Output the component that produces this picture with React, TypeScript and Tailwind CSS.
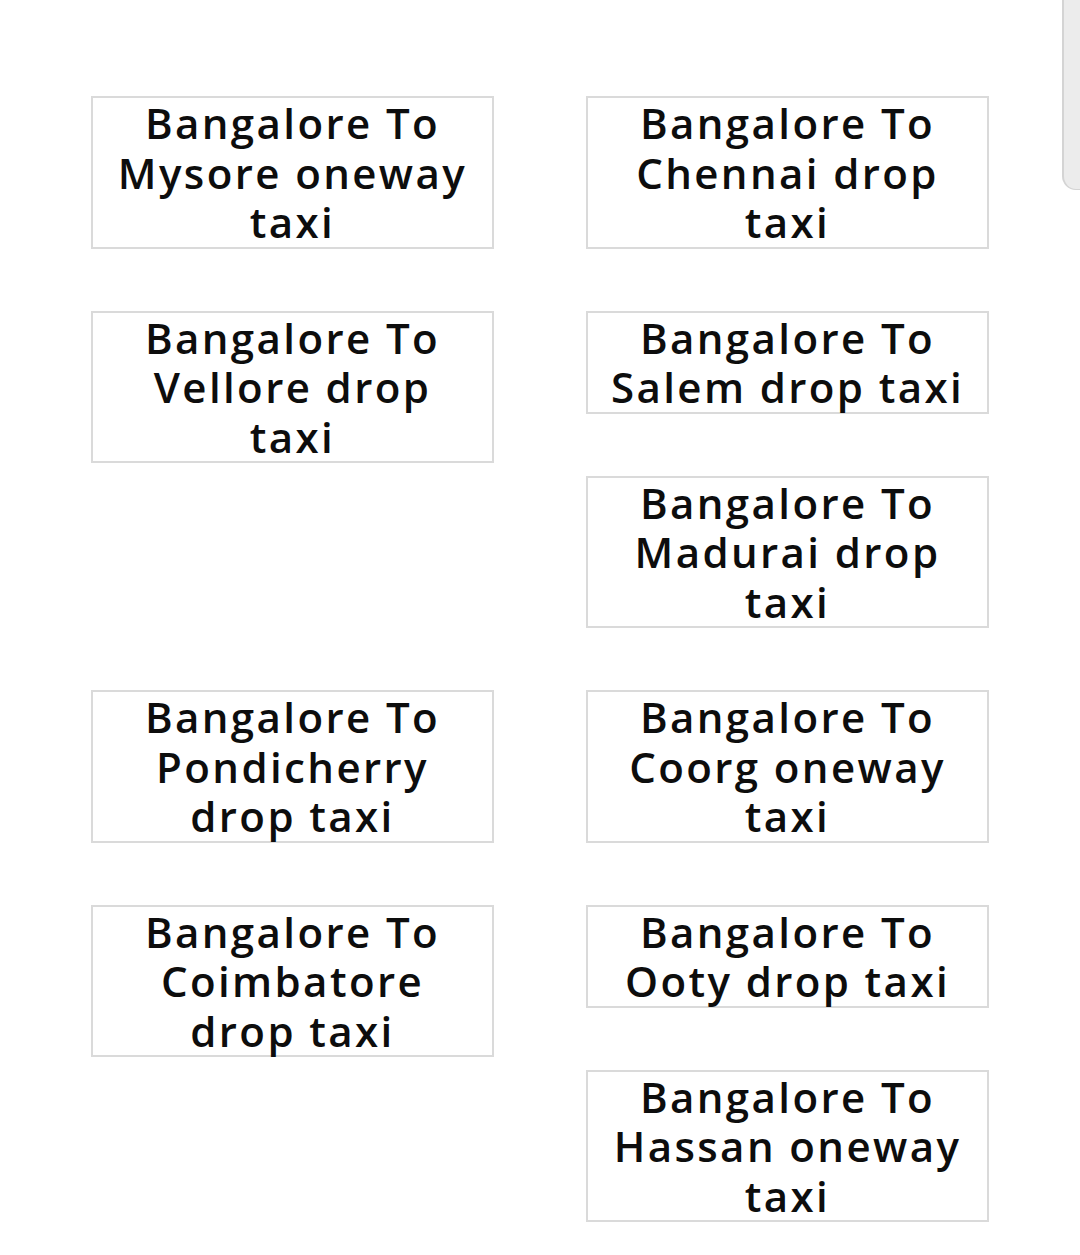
const routes = [
  { label: "Bangalore To Mysore oneway taxi", place: "col-start-1 row-start-1" },
  { label: "Bangalore To Chennai drop taxi", place: "col-start-2 row-start-1" },
  { label: "Bangalore To Vellore drop taxi", place: "col-start-1 row-start-2 row-span-2" },
  { label: "Bangalore To Salem drop taxi", place: "col-start-2 row-start-2" },
  { label: "Bangalore To Madurai drop taxi", place: "col-start-2 row-start-3" },
  { label: "Bangalore To Pondicherry drop taxi", place: "col-start-1 row-start-4" },
  { label: "Bangalore To Coorg oneway taxi", place: "col-start-2 row-start-4" },
  { label: "Bangalore To Coimbatore drop taxi", place: "col-start-1 row-start-5 row-span-2" },
  { label: "Bangalore To Ooty drop taxi", place: "col-start-2 row-start-5" },
  { label: "Bangalore To Hassan oneway taxi", place: "col-start-2 row-start-6" },
];

export default function App() {
  return (
    <div className="relative min-h-[1255px] bg-white font-['Open_Sans',sans-serif] text-[#0d0d0d]">
      <div className="grid grid-cols-2 items-start gap-x-[92px] gap-y-[62px] px-[91px] pt-[96px]">
        {routes.map(({ label, place }) => (
          <a
            key={label}
            href="#"
            className={`${place} self-start border-2 border-[#dadada] px-5 text-center text-[42px] leading-[49.5px] font-semibold tracking-[2.4px]`}
          >
            {label}
          </a>
        ))}
      </div>

      {/* overlay scrollbar thumb */}
      <div className="absolute top-0 right-0 h-[190px] w-[18px] rounded-bl-[14px] border-b border-l-2 border-[#d4d4d4] bg-[#ececec]" />
    </div>
  );
}
